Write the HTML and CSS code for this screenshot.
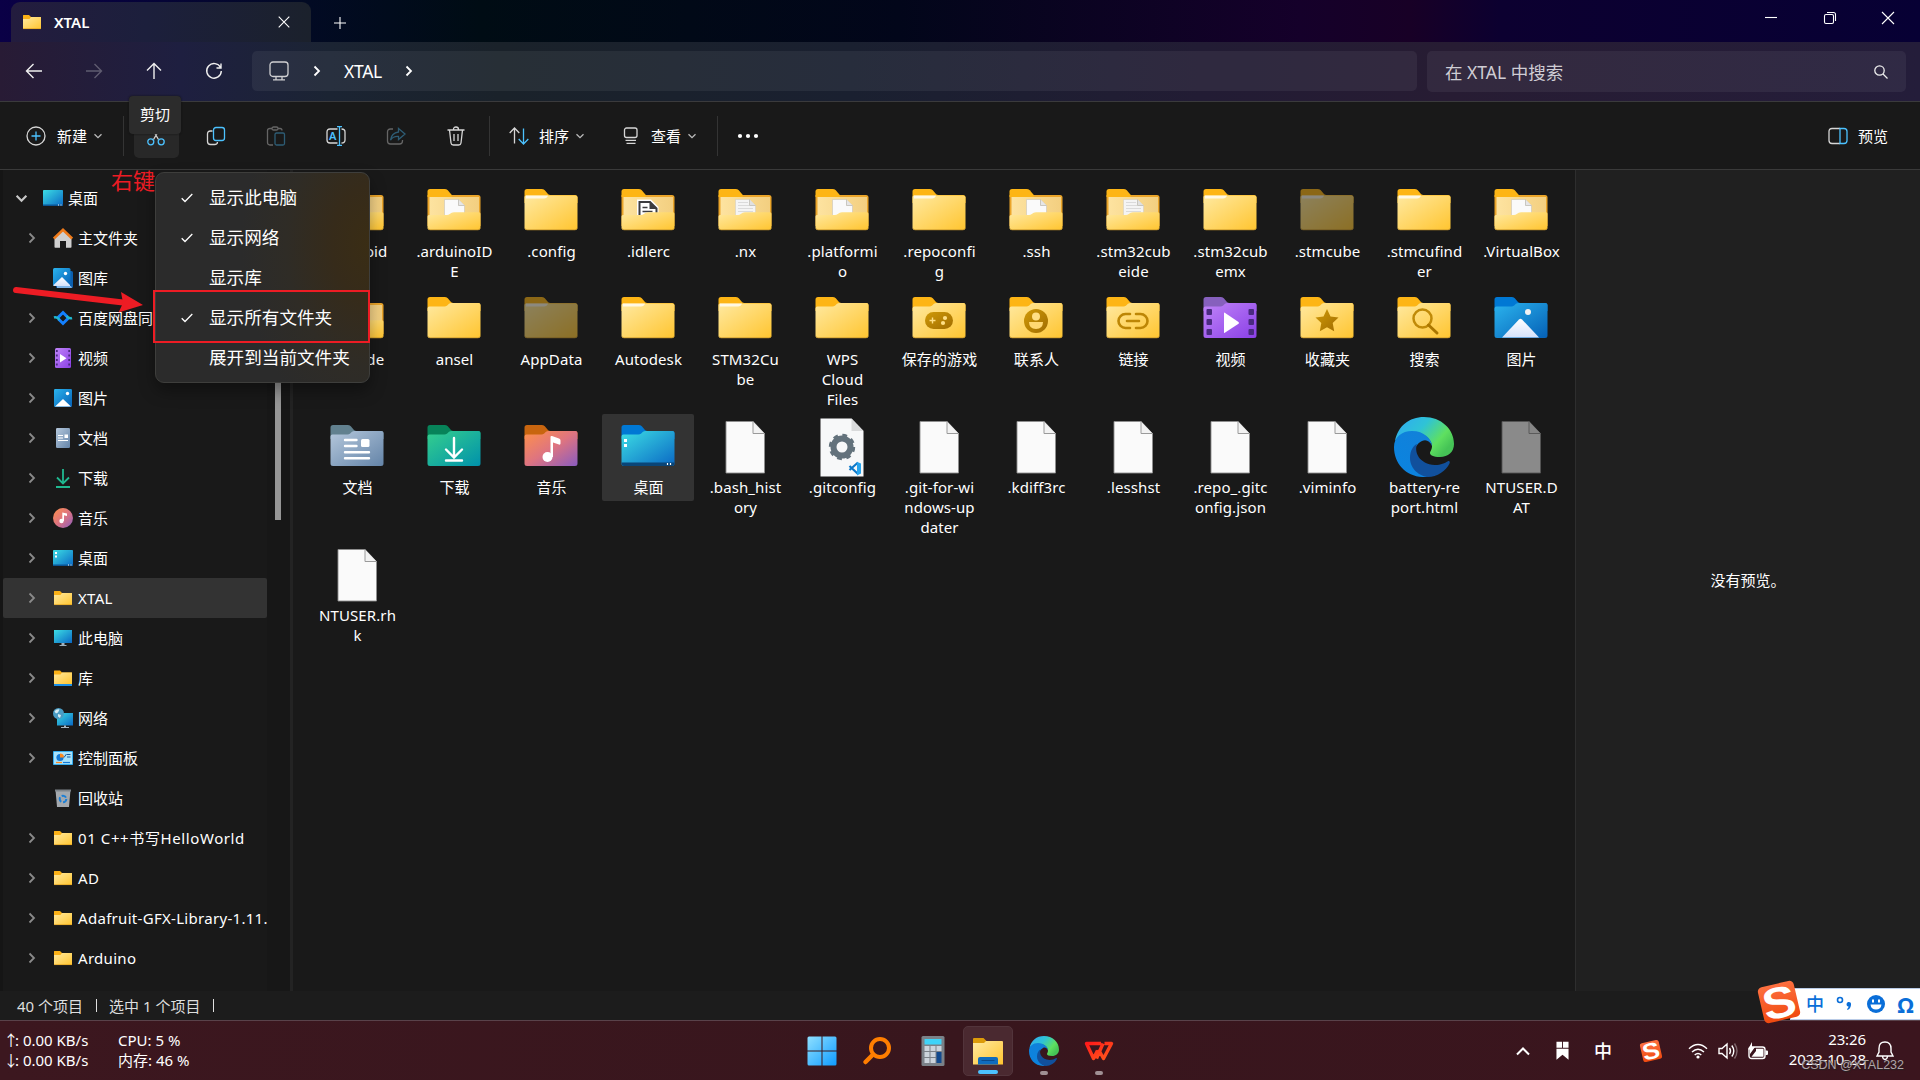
FILE: index.html
```
<!DOCTYPE html>
<html lang="zh-CN">
<head>
  <meta charset="UTF-8" />
  <meta name="viewport" content="width=device-width, initial-scale=1.0"/>
  <title>XTAL</title>
  <link rel="stylesheet" href="styles.css">
</head>
<body>
  <!-- ICONS -->
  <svg class="defs" width="0" height="0">
    <defs>
      <linearGradient id="gFolder" x1="0" y1="0" x2="1" y2="1"><stop offset="0" stop-color="#ffe9a0"/><stop offset="1" stop-color="#ffc530"/></linearGradient>
      <linearGradient id="gInner" x1="0" y1="0" x2="1" y2="0"><stop offset="0" stop-color="#fde3a0"/><stop offset="1" stop-color="#f3cf80"/></linearGradient>
      <linearGradient id="gGold" x1="0" y1="0" x2="1" y2="1"><stop offset="0" stop-color="#d09a08"/><stop offset="1" stop-color="#a06c00"/></linearGradient>
      <linearGradient id="gVideo" x1="0" y1="0" x2="1" y2="1"><stop offset="0" stop-color="#c084f8"/><stop offset="1" stop-color="#8a3fe6"/></linearGradient>
      <linearGradient id="gPic" x1="0" y1="0" x2="1" y2="1"><stop offset="0" stop-color="#2bb4ee"/><stop offset="1" stop-color="#0560b6"/></linearGradient>
      <linearGradient id="gDoc" x1="0" y1="0" x2="1" y2="1"><stop offset="0" stop-color="#b5c8dc"/><stop offset="1" stop-color="#6484a8"/></linearGradient>
      <linearGradient id="gDown" x1="0" y1="0" x2="1" y2="1"><stop offset="0" stop-color="#35cf8d"/><stop offset="1" stop-color="#0091ab"/></linearGradient>
      <linearGradient id="gMusic" x1="0" y1="0" x2="1" y2="1"><stop offset="0" stop-color="#ff914a"/><stop offset=".5" stop-color="#de7480"/><stop offset="1" stop-color="#8a5cc0"/></linearGradient>
      <linearGradient id="gDesk" x1="0" y1="0" x2="1" y2="1"><stop offset="0" stop-color="#3cdde4"/><stop offset="1" stop-color="#0a68c4"/></linearGradient>
      <linearGradient id="gWhite" x1="0" y1="0" x2="0" y2="1"><stop offset="0" stop-color="#fff"/><stop offset="1" stop-color="#d5e2fb"/></linearGradient>
      <linearGradient id="gWin" x1="0" y1="0" x2="1" y2="1"><stop offset="0" stop-color="#8fe0ff"/><stop offset="1" stop-color="#0f9bff"/></linearGradient>
      <linearGradient id="gEdgeTop" x1="0" y1="0" x2="1" y2=".6"><stop offset="0" stop-color="#2fa8f5"/><stop offset=".45" stop-color="#2fc3d6"/><stop offset=".8" stop-color="#5fe060"/><stop offset="1" stop-color="#45c356"/></linearGradient>
      <linearGradient id="gEdgeLeft" x1="1" y1="0" x2="0" y2="1"><stop offset="0" stop-color="#1380d8"/><stop offset="1" stop-color="#0a84e0"/></linearGradient>
      <linearGradient id="gSogou" x1="0" y1="0" x2="0" y2="1"><stop offset="0" stop-color="#fd7040"/><stop offset="1" stop-color="#f04a10"/></linearGradient>
      <linearGradient id="gWps" x1="0" y1="0" x2="1" y2="1"><stop offset="0" stop-color="#ff1a1a"/><stop offset="1" stop-color="#ff5a1c"/></linearGradient>
    </defs>

    <!-- small chrome -->
    <symbol id="chev-right" viewBox="0 0 8 12"><path d="M1.500 1.500 6 6l-4.500 4.500" fill="none" stroke="currentColor" stroke-width="1.800"/></symbol>
    <symbol id="chev-down" viewBox="0 0 12 8"><path d="M1.500 1.500 6 6l4.500-4.500" fill="none" stroke="currentColor" stroke-width="2"/></symbol>
    <symbol id="chev-thin" viewBox="0 0 12 8"><path d="M2.500 2.200 6 5.600l3.500-3.400" fill="none" stroke="currentColor" stroke-width="1.300"/></symbol>
    <symbol id="check" viewBox="0 0 12 10"><path d="M.7 5.200 4 8.500 11.300 1" fill="none" stroke="currentColor" stroke-width="1.300"/></symbol>

    <!-- folders -->
    <symbol id="tab" viewBox="0 0 60 60"><path d="M3.500 22V10.500q0-2.500 2.500-2.500h14.500q2 0 3.300 1.300l3.400 3.900q.8.800 2.300.8H54q2.500 0 2.500 2.500V22z"/></symbol>
    <symbol id="folder" viewBox="0 0 60 60">
      <use href="#tab" fill="#fdb515"/>
      <path d="M3.500 19.500q0-2 2-2h15q1.500 0 2.700-1l1.800-1.700q1-.8 2.500-.8H54.500q2 0 2 2V46.500q0 2.500-2.500 2.500H6q-2.500 0-2.500-2.500z" fill="url(#gFolder)"/>
      <path d="M4 47.300q.5 1.500 2 1.500H54q1.500 0 2-1.500" fill="none" stroke="#c8962a" stroke-width=".8"/>
    </symbol>
    <symbol id="folder-line" viewBox="0 0 60 60">
      <use href="#tab" fill="#fdb515"/>
      <path d="M3.500 16q0-1.500 1.500-1.500H54.500q2 0 2 2V46.500q0 2.500-2.500 2.500H6q-2.500 0-2.500-2.500z" fill="url(#gFolder)"/>
      <path d="M5 14.500h22q-1 3-4 3H5z" fill="#fff" opacity=".75"/>
      <path d="M4 47.300q.5 1.500 2 1.500H54q1.500 0 2-1.500" fill="none" stroke="#c8962a" stroke-width=".8"/>
    </symbol>
    <symbol id="folder-back" viewBox="0 0 60 60">
      <path d="M3.500 14H54q2.500 0 2.500 2.500V45H3.500z" fill="#eba52a"/>
      <path d="M3.500 16V10.500q0-2.500 2.500-2.500h14.500q2 0 3.300 1.300l4 4.700v2z" fill="#fdb515"/>
      <rect x="5.500" y="16" width="49.500" height="27.500" fill="url(#gInner)"/>
    </symbol>
    <symbol id="folder-front" viewBox="0 0 60 60">
      <path d="M3.500 35.500q0-1.500 1.500-1.500h18q1.500 0 2.700-1l2-1.200q1-.6 2.300-.6H55q1.500 0 1.500 1.500V46.500q0 2.500-2.500 2.500H6q-2.500 0-2.500-2.500z" fill="url(#gFolder)"/>
      <path d="M4 47.300q.5 1.500 2 1.500H54q1.500 0 2-1.500" fill="none" stroke="#c8962a" stroke-width=".8"/>
    </symbol>
    <symbol id="folder-file" viewBox="0 0 60 60">
      <use href="#folder-back"/>
      <path d="M20.500 18.500h14l6 6V40h-20z" fill="#fafafa" stroke="#c9c4b8" stroke-width=".6"/>
      <path d="M34.500 18.500v6h6" fill="#e6e6e6" stroke="#b8b4aa" stroke-width=".7"/>
      <use href="#folder-front"/>
    </symbol>
    <symbol id="folder-text" viewBox="0 0 60 60">
      <use href="#folder-back"/>
      <path d="M20.500 18.500h14l6 6V40h-20z" fill="#f4f4f4" stroke="#d5cfc0" stroke-width=".6"/>
      <path d="M23 21.500h10M23 24.500h11M23 27.500h15M23 30.500h15" stroke="#dadada" stroke-width="1"/>
      <path d="M34.500 18.500v6h6" fill="#e0e0e0" stroke="#b8b4aa" stroke-width=".7"/>
      <use href="#folder-front"/>
    </symbol>
    <symbol id="folder-idle" viewBox="0 0 60 60">
      <use href="#folder-back"/>
      <path d="M19 18.500h14l7.500 7.500V40H19z" fill="#fff"/>
      <path d="M21.500 36V21h10.500l6.500 6.500v6" fill="none" stroke="#3c3c40" stroke-width="2"/>
      <path d="M31.500 20.500v7.500h7.500z" fill="#3c3c40"/>
      <path d="M24.500 26.500h5M24.500 30.500h10" stroke="#3c3c40" stroke-width="1.600"/>
      <use href="#folder-front"/>
    </symbol>
    <symbol id="folder-body" viewBox="0 0 60 60">
      <path d="M3.500 19.500q0-2 2-2h15q1.500 0 2.700-1l1.800-1.700q1-.8 2.500-.8H54.500q2 0 2 2V46.500q0 2.500-2.500 2.500H6q-2.500 0-2.500-2.500z"/>
    </symbol>
    <symbol id="folder-games" viewBox="0 0 60 60">
      <use href="#folder"/>
      <rect x="16" y="23" width="28" height="17" rx="8.500" fill="url(#gGold)"/>
      <path d="M20.500 31.500h6M23.500 28.500v6" stroke="#ffdf85" stroke-width="1.400"/>
      <circle cx="36" cy="29" r="2.100" fill="#ffdf85"/><circle cx="34" cy="34" r="2.100" fill="#ffdf85"/>
    </symbol>
    <symbol id="folder-contact" viewBox="0 0 60 60">
      <use href="#folder"/>
      <circle cx="30" cy="32" r="12" fill="url(#gGold)"/>
      <circle cx="30" cy="27.500" r="4" fill="#ffdf85"/>
      <path d="M23 33h14q0 7-7 7t-7-7z" fill="#ffd873"/>
    </symbol>
    <symbol id="folder-link" viewBox="0 0 60 60">
      <use href="#folder"/>
      <path d="M27 25h-4.500a7 7 0 0 0 0 14H27M33 25h4.500a7 7 0 0 1 0 14H33M24 32h12" fill="none" stroke="#bd8605" stroke-width="2.600" stroke-linecap="round"/>
    </symbol>
    <symbol id="folder-star" viewBox="0 0 60 60">
      <use href="#folder"/>
      <path d="M30 20l3.500 7.500 8 1-5.800 5.600 1.500 8.100L30 38.200l-7.200 4 1.500-8.100-5.800-5.600 8-1z" fill="url(#gGold)"/>
    </symbol>
    <symbol id="folder-search" viewBox="0 0 60 60">
      <use href="#folder"/>
      <circle cx="28.500" cy="29.500" r="9" fill="none" stroke="#c08a08" stroke-width="2.500"/>
      <path d="M34.500 36 43 44" stroke="#aa7600" stroke-width="3" stroke-linecap="round"/>
    </symbol>
    <symbol id="folder-video" viewBox="0 0 60 60">
      <use href="#tab" fill="#8660bd"/>
      <use href="#folder-body" fill="url(#gVideo)"/>
      <path d="M24 24v19.500q0 .8.800.3l13.700-9q1-.9 0-1.800l-13.700-9.300q-.8-.5-.8.300z" fill="#fff"/>
      <g fill="#4a2a80"><rect x="6.500" y="20" width="5.500" height="6" rx="1"/><rect x="6.500" y="30" width="5.500" height="6" rx="1"/><rect x="6.500" y="40" width="5.500" height="6" rx="1"/><rect x="48.500" y="20" width="5.500" height="6" rx="1"/><rect x="48.500" y="30" width="5.500" height="6" rx="1"/><rect x="48.500" y="40" width="5.500" height="6" rx="1"/></g>
    </symbol>
    <symbol id="folder-pic" viewBox="0 0 60 60">
      <use href="#tab" fill="#0078d4"/>
      <use href="#folder-body" fill="url(#gPic)"/>
      <path d="M11 48.500 28 30.500q1.500-1.500 3 0L48 48.500z" fill="url(#gWhite)"/>
      <circle cx="37" cy="23" r="3" fill="#f3f3f3"/>
    </symbol>
    <symbol id="folder-doc" viewBox="0 0 60 60">
      <use href="#tab" fill="#62818f"/>
      <use href="#folder-body" fill="url(#gDoc)"/>
      <path d="M18 23h11.500M18 29h11.500M18 35.200h24M18 41.300h24" stroke="#fff" stroke-width="2.400" stroke-linecap="round"/>
      <rect x="34" y="22" width="8.500" height="8" rx="1.500" fill="#fff"/>
    </symbol>
    <symbol id="folder-down" viewBox="0 0 60 60">
      <use href="#tab" fill="#078359"/>
      <use href="#folder-body" fill="url(#gDown)"/>
      <path d="M30 21v19M22 32.500l8 8 8-8M22 43.500h16" fill="none" stroke="#fff" stroke-width="2.400" stroke-linecap="round"/>
    </symbol>
    <symbol id="folder-music" viewBox="0 0 60 60">
      <use href="#tab" fill="#c8650f"/>
      <use href="#folder-body" fill="url(#gMusic)"/>
      <ellipse cx="26.500" cy="40" rx="5" ry="5" fill="#fff"/>
      <path d="M29.500 40V20q0-1.500 1.500-1l7 2.500q1.500.5 1.500 2v3q0 1.500-1.500 1l-6-2V40z" fill="#fff"/>
    </symbol>
    <symbol id="folder-desk" viewBox="0 0 60 60">
      <use href="#tab" fill="#0078d4"/>
      <use href="#folder-body" fill="url(#gDesk)"/>
      <path d="M3.500 45.500h53v1q0 2.500-2.500 2.500H6q-2.500 0-2.500-2.500z" fill="#0a4577"/>
      <path d="M49.500 46v2M52.500 46v2" stroke="#fff" stroke-width="1.200"/>
      <rect x="6" y="22" width="3" height="3" fill="#fff"/><rect x="6" y="27" width="3" height="3" fill="#fff"/>
    </symbol>

    <!-- files -->
    <symbol id="file" viewBox="0 0 60 60">
      <path d="M11 4.500h27L49.500 16.500V56H11z" fill="#fafafa" stroke="#8f8f8f" stroke-width=".9"/>
      <path d="M38 4.500v12h11.500" fill="#f2f2f2" stroke="#9a9a9a" stroke-width="1"/>
    </symbol>
    <symbol id="file-config" viewBox="0 0 60 60">
      <path d="M8.500 1.500h31L51.500 14V59.500h-43z" fill="#f7f8f9"/>
      <path d="M39.500 1.500V14h12z" fill="#d9dadb"/>
      <circle cx="30" cy="30" r="8.500" fill="none" stroke="#63727c" stroke-width="6"/>
      <circle cx="30" cy="30" r="11.700" fill="none" stroke="#63727c" stroke-width="3" stroke-dasharray="4.700 4.490"/>
      <path d="M46 45.500 37.500 53M46 57 37.500 49" stroke="#0e78c8" stroke-width="2.200"/>
      <path d="M45 45l4 1.500v10L45 58.500z" fill="#27a5ee"/>
    </symbol>
    <symbol id="edge" viewBox="0 0 60 60">
      <path d="M1 24C4 9 15 0 30 0c17 0 30 12 30 27 0 8-6 13-14 13-7 0-10-2-10-4 0-1.500 2-3 2-7 0-4-5-13-17-13C10 16 3 21 1 24z" fill="url(#gEdgeTop)"/>
      <path d="M0 30C0 20 8 14 18 14c12 0 20 8 20 15-2-5-6-7-10-5-6 3-10 10-8 20 2 9 9 15 14 15.800C14 62 0 48 0 30z" fill="url(#gEdgeLeft)"/>
      <path d="M23 27c-3 8 2 20 18 21 6 0 10-2 12.500-3.500 1.500-1 3 0 2 2C52 54 43 60 34 60c-8-.5-18-8-18-19 0-8 4-13 7-14z" fill="#11509c"/>
    </symbol>

    <!-- navigation pane -->
    <symbol id="s-folder" viewBox="0 0 20 20"><path d="M1 9V3.500Q1 3 1.500 3H7l2 2h9.500q.5 0 .5.500V9z" fill="#fbb116"/><path d="M1 7h6.500L9 5h10v11.500q0 .5-.5.500h-17Q1 17 1 16.500z" fill="url(#gFolder)"/><path d="M1 16.600h18" stroke="#e0a020" stroke-width=".7"/></symbol>
    <symbol id="s-lib" viewBox="0 0 20 20"><path d="M1 9V3q0-.5.500-.5H7l2 2h9.500q.5 0 .5.500v4z" fill="#fbb116"/><path d="M1 6.500h6.500L9 4.500h10V16H1z" fill="url(#gFolder)"/><path d="M1 16h18v2H1z" fill="#1a8ee6"/></symbol>
    <symbol id="s-desk" viewBox="0 0 20 20"><rect y="2" width="20" height="16" rx=".8" fill="url(#gDesk)"/><path d="M0 16.500h20V18H0z" fill="#0a5494"/><path d="M15 17h1M17.500 17h1" stroke="#fff"/></symbol>
    <symbol id="s-desk2" viewBox="0 0 20 20"><use href="#s-desk"/><path d="M2 4h2v2H2zM2 7.500h2v2H2z" fill="#fff"/></symbol>
    <symbol id="s-home" viewBox="0 0 20 20"><path d="M1.500 9.500 10 2l8.500 7.500V19q0 .8-.8.800H13V13H7v6.800H2.300q-.8 0-.8-.8z" fill="#cfcfcf"/><path d="M.8 10.500 10 1.800l9.200 8.700" fill="none" stroke="#ee7a1a" stroke-width="2.600"/></symbol>
    <symbol id="s-gallery" viewBox="0 0 20 20"><rect x="3" y="3" width="17" height="17" rx="1.500" fill="#0c5fae"/><path d="M4 18h14l1 2H4z" fill="#7fb4e8"/><rect width="17.500" height="18" rx="1.500" fill="url(#gPic)"/><path d="M.5 17 9 9l8 8v1H.5z" fill="url(#gWhite)"/><circle cx="12.500" cy="5.500" r="1.700" fill="#fff"/></symbol>
    <symbol id="s-baidu" viewBox="0 0 20 20"><path d="M4.500 10 10 4.500l4.500 4.500M15.500 10 10 15.500 5.500 11" fill="none" stroke="#1480ff" stroke-width="3"/><path d="M13.500 8q2.500 3 5.500 2M6.500 12Q4 8.500 1 9.500" fill="none" stroke="#20b8d0" stroke-width="2.600"/></symbol>
    <symbol id="s-video" viewBox="0 0 20 20"><rect x="2" width="16" height="20" rx="1.500" fill="url(#gVideo)"/><path d="M7 6v8.500l6.500-4.250z" fill="#fff"/><path d="M3.800 2v17M16.200 2v17" stroke="#4a2a80" stroke-width="1.800" stroke-dasharray="2 2.500"/></symbol>
    <symbol id="s-pic" viewBox="0 0 20 20"><rect x="1" y="1" width="18" height="18" rx="1.200" fill="url(#gPic)"/><path d="M2 18.500 10 11l8 7.500z" fill="#fff"/><circle cx="14.500" cy="5.500" r="1.700" fill="#fff"/></symbol>
    <symbol id="s-doc" viewBox="0 0 20 20"><rect x="3" width="14" height="20" rx="1.200" fill="url(#gDoc)"/><path d="M5 7.500h5M5 10h5M5 12.500h10" stroke="#fff" stroke-width="1.200"/><rect x="11.500" y="6.500" width="3.500" height="3.500" fill="#fff"/></symbol>
    <symbol id="s-down" viewBox="0 0 20 20"><path d="M10 1v14M4 9.500l6 6 6-6M3 19h14" fill="none" stroke="#20b890" stroke-width="1.800"/></symbol>
    <symbol id="s-music" viewBox="0 0 20 20"><circle cx="10" cy="10" r="10" fill="url(#gMusic)"/><circle cx="8.500" cy="13" r="2.200" fill="#fff"/><path d="M9.300 13V4.500l4.700 1v2.500l-3-.7V13z" fill="#fff"/></symbol>
    <symbol id="s-pc" viewBox="0 0 20 20"><rect x="1" y="2" width="18" height="13" fill="url(#gDesk)"/><path d="M8.500 15h3v2h2v1h-7v-1h2z" fill="#9fb0bc"/></symbol>
    <symbol id="s-net" viewBox="0 0 20 20"><rect x="4" y="5" width="16" height="12.500" fill="url(#gDesk)"/><path d="M11 17.500h2v1.500h3v1H8v-1h3z" fill="#a9b6c0"/><circle cx="5.500" cy="5.500" r="5.500" fill="#4a9cc4"/><path d="M1.500 3.500q2-3 5-2l-1.500 3-2 1zM5 6l3 1-1 3-2-1.500z" fill="#d6ecf4"/></symbol>
    <symbol id="s-control" viewBox="0 0 20 20"><rect y="3" width="20" height="14" rx=".8" fill="#35aef0"/><rect x="1" y="4" width="18" height="12" fill="#a8e2fb"/><circle cx="7" cy="9.500" r="3.600" fill="#1478d4"/><path d="M7 9.500V5.500a4 4 0 0 1 4 4z" fill="#ff8a1e"/><path d="M11 9.500 13.500 6M14 6.500h3.500M14 9h3.500" stroke="#15599c" stroke-width="1"/><path d="M3 14.500h6" stroke="#ff8a1e" stroke-width="1.200"/><path d="M10 14.500h7" stroke="#1478d4" stroke-width="1.200"/></symbol>
    <symbol id="s-bin" viewBox="0 0 20 20"><path d="M2.500 2h15L16 19H4z" fill="#a4a9ae"/><path d="M2 1.500h16v2H2z" fill="#7e858b"/><circle cx="10" cy="11" r="3.300" fill="none" stroke="#1b7fd6" stroke-width="2" stroke-dasharray="5 1.900"/></symbol>
    <symbol id="sogou" viewBox="0 0 40 40">
      <g transform="rotate(-13 20 20)"><rect x="4" y="4" width="32" height="32" rx="4" fill="url(#gSogou)"/><text x="20" y="33.500" text-anchor="middle" textLength="29" lengthAdjust="spacingAndGlyphs" class="sogou-s">S</text></g>
    </symbol>
  </svg>

  <div class="window">
    <!-- TITLE BAR -->
    <header class="titlebar">
      <div class="tab">
        <svg class="i20"><use href="#s-folder"/></svg>
        <span class="tab-title">XTAL</span>
        <svg class="tab-close" viewBox="0 0 12 12"><path d="M.7.700 11.300 11.300M11.300.7.700 11.300"/></svg>
      </div>
      <svg class="new-tab" viewBox="0 0 14 14"><path d="M7 1v12M1 7h12"/></svg>
      <div class="caption">
        <svg viewBox="0 0 14 14"><path d="M1 6.500h12"/></svg>
        <svg viewBox="0 0 14 14"><rect x="1.500" y="3.500" width="9" height="9" rx="1.500"/><path d="M4 1.500h6.500q2 0 2 2V10"/></svg>
        <svg viewBox="0 0 14 14"><path d="M1 1l12 12M13 1 1 13"/></svg>
      </div>
    </header>

    <!-- ADDRESS ROW -->
    <nav class="navbar">
      <div class="nav-buttons">
        <svg viewBox="0 0 18 18"><path d="M17 9H1.500M8.500 2l-7 7 7 7"/></svg>
        <svg class="dim" viewBox="0 0 18 18"><path d="M1 9h15.500M9.500 2l7 7-7 7"/></svg>
        <svg viewBox="0 0 18 18"><path d="M9 17V1.500M2 8.500l7-7 7 7"/></svg>
        <svg viewBox="0 0 18 18"><path d="M15.500 5.500A7.300 7.300 0 1 0 16.300 9M16 1.500V6h-4.500"/></svg>
      </div>
      <div class="address">
        <svg class="pc" viewBox="0 0 20 20"><rect x="1" y="1" width="18" height="14.500" rx="3"/><path d="M7 15.500v3M13 15.500v3M4 18.800h12"/></svg>
        <svg class="crumb"><use href="#chev-right"/></svg>
        <span>XTAL</span>
        <svg class="crumb"><use href="#chev-right"/></svg>
      </div>
      <div class="search">
        <span>在 XTAL 中搜索</span>
        <svg viewBox="0 0 14 14"><circle cx="5.500" cy="5.500" r="4.700"/><path d="M9 9l4.500 4.500"/></svg>
      </div>
    </nav>

    <!-- COMMAND BAR -->
    <div class="toolbar">
      <div class="cmd cmd-new">
        <svg class="i20 ln" viewBox="0 0 20 20"><circle cx="10" cy="10" r="9"/><path class="blue" d="M10 5.500v9M5.500 10h9"/></svg>
        <span>新建</span>
        <svg class="drop"><use href="#chev-thin"/></svg>
      </div>
      <i class="sep"></i>
      <div class="icons">
        <div class="cut">
          <svg class="i20 ln" viewBox="0 0 20 20"><path d="M5 1l7.500 12.500M15 1 7.500 13.500"/><circle class="blue" cx="4.800" cy="15.800" r="3"/><circle class="blue" cx="15.200" cy="15.800" r="3"/></svg>
          <div class="tooltip">剪切</div>
        </div>
        <svg class="i20 ln" viewBox="0 0 20 20"><path d="M6.500 5H4.500Q1.500 5 1.500 8v7.500q0 3 3 3h4q3 0 3-2.500"/><rect class="blue" x="7.500" y="1.500" width="11" height="13" rx="2.500"/></svg>
        <svg class="i20 ln off" viewBox="0 0 20 20"><path d="M7 19H4q-2.500 0-2.500-2.500V4.500Q1.500 2.500 4 2.500h2M12 2.500h2q2 0 2 2"/><rect x="6" y="1" width="6" height="3" rx="1.500"/><rect class="blue" x="9" y="7" width="9.500" height="12" rx="1.500"/></svg>
        <svg class="i20 ln" viewBox="0 0 20 20"><path d="M11.500 3H4Q1 3 1 6v8q0 3 3 3h7.500M15.500 3q3.500 0 3.500 3v8q0 3-3.500 3"/><path class="blue" d="M13.500.700v18.600M11 .7h5M11 19.300h5"/><text x="6.800" y="14" text-anchor="middle" class="rename-a">A</text></svg>
        <svg class="i20 ln off" viewBox="0 0 20 20"><path d="M7 3H4.500Q1.500 3 1.500 6v9q0 3 3 3h9q3 0 3-3v-1"/><path class="blue" d="M12.500 2.500 19 8l-6.500 5.500v-3q-5-.5-8 3.500 1-7 8-8z"/></svg>
        <svg class="i20 ln" viewBox="0 0 20 20"><path d="M1.500 4h17M3.500 4l1.500 13q.3 2 2.300 2h5.400q2 0 2.300-2L16.500 4M7.500 3.500q0-2.500 2.500-2.500t2.500 2.500M8 8v7M12 8v7"/></svg>
      </div>
      <i class="sep"></i>
      <div class="cmd cmd-sort">
        <svg class="i20 ln" viewBox="0 0 20 20"><path d="M5.500 17.500V2M.7 7l4.800-5 4.800 5"/><path class="blue" d="M14.500 2.500V18M9.700 13l4.800 5 4.800-5"/></svg>
        <span>排序</span>
        <svg class="drop"><use href="#chev-thin"/></svg>
      </div>
      <div class="cmd cmd-view">
        <svg class="i20 ln" viewBox="0 0 20 20"><rect x="3.500" y="2" width="12.500" height="9.500" rx="2"/><path d="M4.500 14.300h10.500M5.500 17.300h9"/></svg>
        <span>查看</span>
        <svg class="drop"><use href="#chev-thin"/></svg>
      </div>
      <i class="sep"></i>
      <svg class="dots" viewBox="0 0 22 6"><circle cx="3" cy="3" r="2.100"/><circle cx="11" cy="3" r="2.100"/><circle cx="19" cy="3" r="2.100"/></svg>
      <div class="cmd cmd-preview">
        <svg class="i20 ln" viewBox="0 0 20 20"><path d="M12 2.500H4Q1 2.500 1 5.500v9q0 3 3 3h8"/><path class="blue" d="M12 2.500h4q3 0 3 3v9q0 3-3 3h-4z"/></svg>
        <span>预览</span>
      </div>
    </div>

    <main class="content">
      <!-- TREE -->
      <aside class="sidebar">
        <ul class="tree">
          <li class="root"><svg class="open"><use href="#chev-down"/></svg><svg class="i20"><use href="#s-desk"/></svg><span>桌面</span></li>
          <li><svg class="arrow"><use href="#chev-right"/></svg><svg class="i20"><use href="#s-home"/></svg><span>主文件夹</span></li>
          <li><i class="arrow"></i><svg class="i20"><use href="#s-gallery"/></svg><span>图库</span></li>
          <li><svg class="arrow"><use href="#chev-right"/></svg><svg class="i20"><use href="#s-baidu"/></svg><span>百度网盘同</span></li>
          <li><svg class="arrow"><use href="#chev-right"/></svg><svg class="i20"><use href="#s-video"/></svg><span>视频</span></li>
          <li><svg class="arrow"><use href="#chev-right"/></svg><svg class="i20"><use href="#s-pic"/></svg><span>图片</span></li>
          <li><svg class="arrow"><use href="#chev-right"/></svg><svg class="i20"><use href="#s-doc"/></svg><span>文档</span></li>
          <li><svg class="arrow"><use href="#chev-right"/></svg><svg class="i20"><use href="#s-down"/></svg><span>下载</span></li>
          <li><svg class="arrow"><use href="#chev-right"/></svg><svg class="i20"><use href="#s-music"/></svg><span>音乐</span></li>
          <li><svg class="arrow"><use href="#chev-right"/></svg><svg class="i20"><use href="#s-desk2"/></svg><span>桌面</span></li>
          <li class="selected"><svg class="arrow"><use href="#chev-right"/></svg><svg class="i20"><use href="#s-folder"/></svg><span class="en">XTAL</span></li>
          <li><svg class="arrow"><use href="#chev-right"/></svg><svg class="i20"><use href="#s-pc"/></svg><span>此电脑</span></li>
          <li><svg class="arrow"><use href="#chev-right"/></svg><svg class="i20"><use href="#s-lib"/></svg><span>库</span></li>
          <li><svg class="arrow"><use href="#chev-right"/></svg><svg class="i20"><use href="#s-net"/></svg><span>网络</span></li>
          <li><svg class="arrow"><use href="#chev-right"/></svg><svg class="i20"><use href="#s-control"/></svg><span>控制面板</span></li>
          <li><i class="arrow"></i><svg class="i20"><use href="#s-bin"/></svg><span>回收站</span></li>
          <li><svg class="arrow"><use href="#chev-right"/></svg><svg class="i20"><use href="#s-folder"/></svg><span class="en wide">01 C++书写HelloWorld</span></li>
          <li><svg class="arrow"><use href="#chev-right"/></svg><svg class="i20"><use href="#s-folder"/></svg><span class="en">AD</span></li>
          <li><svg class="arrow"><use href="#chev-right"/></svg><svg class="i20"><use href="#s-folder"/></svg><span class="en">Adafruit-GFX-Library-1.11.</span></li>
          <li><svg class="arrow"><use href="#chev-right"/></svg><svg class="i20"><use href="#s-folder"/></svg><span class="en">Arduino</span></li>
        </ul>
        <div class="scrollbar"><div class="thumb"></div></div>
      </aside>

      <!-- FILES -->
      <section class="files">
        <div class="item"><svg><use href="#folder-file"/></svg><p>.android</p></div>
        <div class="item"><svg><use href="#folder-file"/></svg><p>.arduinoID<br>E</p></div>
        <div class="item"><svg><use href="#folder-line"/></svg><p>.config</p></div>
        <div class="item"><svg><use href="#folder-idle"/></svg><p>.idlerc</p></div>
        <div class="item"><svg><use href="#folder-text"/></svg><p>.nx</p></div>
        <div class="item"><svg><use href="#folder-file"/></svg><p>.platformi<br>o</p></div>
        <div class="item"><svg><use href="#folder-line"/></svg><p>.repoconfi<br>g</p></div>
        <div class="item"><svg><use href="#folder-file"/></svg><p>.ssh</p></div>
        <div class="item"><svg><use href="#folder-text"/></svg><p>.stm32cub<br>eide</p></div>
        <div class="item"><svg><use href="#folder-line"/></svg><p>.stm32cub<br>emx</p></div>
        <div class="item hidden-file"><svg><use href="#folder-line"/></svg><p>.stmcube</p></div>
        <div class="item"><svg><use href="#folder-line"/></svg><p>.stmcufind<br>er</p></div>
        <div class="item"><svg><use href="#folder-file"/></svg><p>.VirtualBox</p></div>

        <div class="item"><svg><use href="#folder-file"/></svg><p>.vscode</p></div>
        <div class="item"><svg><use href="#folder"/></svg><p>ansel</p></div>
        <div class="item hidden-file"><svg><use href="#folder-line"/></svg><p>AppData</p></div>
        <div class="item"><svg><use href="#folder-line"/></svg><p>Autodesk</p></div>
        <div class="item"><svg><use href="#folder-line"/></svg><p>STM32Cu<br>be</p></div>
        <div class="item"><svg><use href="#folder"/></svg><p>WPS<br>Cloud<br>Files</p></div>
        <div class="item"><svg><use href="#folder-games"/></svg><p>保存的游戏</p></div>
        <div class="item"><svg><use href="#folder-contact"/></svg><p>联系人</p></div>
        <div class="item"><svg><use href="#folder-link"/></svg><p>链接</p></div>
        <div class="item"><svg><use href="#folder-video"/></svg><p>视频</p></div>
        <div class="item"><svg><use href="#folder-star"/></svg><p>收藏夹</p></div>
        <div class="item"><svg><use href="#folder-search"/></svg><p>搜索</p></div>
        <div class="item"><svg><use href="#folder-pic"/></svg><p>图片</p></div>

        <div class="item"><svg><use href="#folder-doc"/></svg><p>文档</p></div>
        <div class="item"><svg><use href="#folder-down"/></svg><p>下载</p></div>
        <div class="item"><svg><use href="#folder-music"/></svg><p>音乐</p></div>
        <div class="item selected"><svg><use href="#folder-desk"/></svg><p>桌面</p></div>
        <div class="item"><svg><use href="#file"/></svg><p>.bash_hist<br>ory</p></div>
        <div class="item"><svg><use href="#file-config"/></svg><p>.gitconfig</p></div>
        <div class="item"><svg><use href="#file"/></svg><p>.git-for-wi<br>ndows-up<br>dater</p></div>
        <div class="item"><svg><use href="#file"/></svg><p>.kdiff3rc</p></div>
        <div class="item"><svg><use href="#file"/></svg><p>.lesshst</p></div>
        <div class="item"><svg><use href="#file"/></svg><p>.repo_.gitc<br>onfig.json</p></div>
        <div class="item"><svg><use href="#file"/></svg><p>.viminfo</p></div>
        <div class="item"><svg><use href="#edge"/></svg><p>battery-re<br>port.html</p></div>
        <div class="item hidden-file"><svg><use href="#file"/></svg><p>NTUSER.D<br>AT</p></div>

        <div class="item"><svg><use href="#file"/></svg><p>NTUSER.rh<br>k</p></div>
      </section>

      <aside class="preview">没有预览。</aside>
    </main>

    <footer class="status"><span>40 个项目</span><i></i><span>选中 1 个项目</span><i></i></footer>

    <!-- CONTEXT MENU -->
    <ul class="menu">
      <li><svg><use href="#check"/></svg>显示此电脑</li>
      <li><svg><use href="#check"/></svg>显示网络</li>
      <li>显示库</li>
      <li><svg><use href="#check"/></svg>显示所有文件夹</li>
      <li>展开到当前文件夹</li>
    </ul>

    <!-- red marks -->
    <div class="note">右键</div>
    <div class="mark"></div>
    <svg class="pointer" viewBox="0 0 132 28"><path d="M5 4 L112 16.500" stroke="#ed1c24" stroke-width="6" stroke-linecap="round"/><path d="M110 6 L132 19 L107.500 26.500 L112 17z" fill="#ed1c24"/></svg>
  </div>

  <!-- TASKBAR -->
  <div class="taskbar">
    <div class="monitor">
      <span><b>↑</b>: 0.00 KB/s</span><span>CPU: 5 %</span>
      <span><b>↓</b>: 0.00 KB/s</span><span>内存: 46 %</span>
    </div>
    <div class="apps">
      <div class="app"><svg viewBox="0 0 30 30"><path d="M.5 2q0-1.500 1.500-1.500h12.500v14H.5zM15.500.5H28q1.500 0 1.500 1.500v12.500h-14zM.5 15.500h14v14H2Q.5 29.500.5 28zM15.500 15.500h14V28q0 1.500-1.500 1.500H15.500z" fill="url(#gWin)"/></svg></div>
      <div class="app"><svg viewBox="0 0 30 30"><circle cx="18" cy="12" r="9" fill="none" stroke="#ff7e00" stroke-width="4"/><path d="M11 18.500 3.500 26" stroke="#ff7e00" stroke-width="4.500" stroke-linecap="round"/></svg></div>
      <div class="app"><svg viewBox="0 0 30 30"><rect x="3.500" width="23" height="30" rx="1.500" fill="#7b8188"/><rect x="6.500" y="3" width="17" height="5.500" rx=".5" fill="#3fd3f8"/><g fill="#ccd4dc"><rect x="6.500" y="10" width="5" height="5"/><rect x="12.500" y="10" width="5" height="5"/><rect x="18.500" y="10" width="5" height="5"/><rect x="6.500" y="16" width="5" height="5"/><rect x="12.500" y="16" width="5" height="5"/><rect x="6.500" y="22" width="5" height="5"/><rect x="12.500" y="22" width="5" height="5"/></g><rect x="18.500" y="16" width="5" height="11" fill="#124a8e"/></svg></div>
      <div class="app active"><svg viewBox="0 0 30 30"><path d="M0 10V3q0-1 1-1h9.500l3 3H13v5z" fill="#dc9b0a"/><path d="M0 7h11l2-2h16q1 0 1 1v22.500H0z" fill="url(#gFolder)"/><path d="M5 28.500V23q0-2 2-2h16q2 0 2 2v5.500z" fill="#0f6cbd"/><path d="M8.500 24.500h13" stroke="#0a4a8a"/></svg></div>
      <div class="app running"><svg><use href="#edge"/></svg></div>
      <div class="app running"><svg viewBox="0 0 30 30"><path d="M17 7.500H2.500L9.500 22.500l4-8M12.500 22.500 19 7.500M14.500 13.500l5 9L27.500 7.500h-7" fill="none" stroke="url(#gWps)" stroke-width="3.400" stroke-linejoin="round"/></svg></div>
    </div>
    <div class="tray">
      <svg class="t-up" viewBox="0 0 14 10"><path d="M1 8.500l6-6 6 6"/></svg>
      <svg class="t-flag" viewBox="0 0 14 20"><path d="M.5.500H6.500V7H.5zM7.500.500h6V7h-6zM.5 8h13v12L7 14.500.5 20z"/></svg>
      <span class="t-zh">中</span>
      <svg class="t-sogou"><use href="#sogou"/></svg>
      <svg class="t-net" viewBox="0 0 20 16"><path d="M1 5.800q9-8.500 18 0M4 9q6-5.500 12 0M6.700 12q3.300-3 6.600 0"/><circle cx="10" cy="14" r="1.600"/></svg>
      <svg class="t-vol" viewBox="0 0 20 18"><path d="M1 6.500h3L9 2v14l-5-4.500H1zM11.500 6q2 3 0 6M13.800 3.500q4 5.500 0 11"/><path d="M16.500 1.500q5 7.500 0 15" opacity=".35"/></svg>
      <svg class="t-bat" viewBox="0 0 20 18"><rect x="1" y="5" width="16" height="11.500" rx="2.500"/><path class="fill" d="M8 6.800h7.500v7.900h-12L8 9zM17.500 8.500H19q1 0 1 1v2.500q0 1-1 1h-1.500z"/><path class="fill" d="M4 0v5h3L2 12V7.500H0z"/></svg>
      <div class="clock"><span>23:26</span><span>2023-10-28</span></div>
      <svg class="t-bell" viewBox="0 0 18 20"><path d="M9 1q-6 0-6 6.500V11l-2 4h16l-2-4V7.500Q15 1 9 1zM6.500 15.500q.5 3 2.500 3t2.500-3"/></svg>
    </div>
  </div>

  <!-- IME bar -->
  <div class="ime">
    <svg class="ime-logo"><use href="#sogou"/></svg>
    <span>中</span>
    <svg viewBox="0 0 18 16"><circle cx="4" cy="4" r="2.500" fill="none" stroke="#0a6ed8" stroke-width="1.600"/><path d="M12 6q3.500-.5 3 3-.5 4-3.500 5l-.5-1q1.500-1 1.500-2.500-2 0-2-2 0-2 1.500-2.500z" fill="#0a6ed8"/></svg>
    <svg viewBox="0 0 18 18"><circle cx="9" cy="9" r="9" fill="#0a6ed8"/><path d="M5 4.500h2v3H5zM11 4.500h2v3h-2zM3.500 9.500h11q-.5 5-5.500 5t-5.500-5z" fill="#fff"/></svg>
    <span class="omega">Ω</span>
  </div>
  <div class="watermark">CSDN @XTAL232</div>
</body>
</html>
```
FILE: styles.css
```
* {
  box-sizing: border-box;
}

body {
  margin: 0;
  width: 1920px;
  height: 1080px;
  overflow: hidden;
  position: relative;
  font-family: "Noto Sans", "Noto Sans CJK SC", sans-serif;
  font-size: 15px;
  line-height: 20px;
  color: #fff;
  background: #191919;
}

ul, p {
  margin: 0;
  padding: 0;
  list-style: none;
}

svg {
  display: block;
  flex: none;
}

.defs {
  position: absolute;
}

.i20 {
  width: 20px;
  height: 20px;
}

.window {
  height: 1020px;
  display: flex;
  flex-direction: column;
}

/* title bar */
.titlebar {
  height: 42px;
  flex: none;
  display: flex;
  align-items: flex-end;
  padding-left: 11px;
  background: linear-gradient(90deg, #0a0046 0, #06023c 120px, #020a24 300px, #000c14 480px, #02061a 900px, #15002a 1300px, #180026 1410px, #0c0030 1500px, #070034 1920px);
}

.tab {
  width: 300px;
  height: 40px;
  display: flex;
  align-items: center;
  padding: 0 21px 0 11px;
  border-radius: 9px 9px 0 0;
  background: linear-gradient(90deg, #231c3e, #1c1f3c 45%, #1b212c);
}

.tab-title {
  margin-left: 12px;
  font-size: 15px;
  font-weight: 600;
  flex: 1;
}

.tab-close {
  width: 12px;
  height: 12px;
}

.titlebar svg path, .caption rect {
  stroke: #fff;
  stroke-width: 1.1;
  fill: none;
}

.new-tab {
  width: 14px;
  height: 14px;
  margin: 0 0 12px 22px;
}

.caption {
  margin: 0 25px 17px auto;
  display: flex;
  gap: 44.5px;
}

.caption svg {
  width: 14px;
  height: 14px;
}

/* address row */
.navbar {
  height: 60px;
  flex: none;
  display: flex;
  padding: 9px 14px 0 25px;
  border-bottom: 1px solid #3a3a3c;
  background: linear-gradient(90deg, #281b35 0, #1e1f40 180px, #1b2433 330px, #1a222a 500px, #1a2030 850px, #221c34 1200px, #271c33 1450px, #241d3a 1920px);
}

.nav-buttons {
  width: 227px;
  height: 40px;
  display: flex;
  align-items: center;
  gap: 42px;
}

.nav-buttons svg {
  width: 18px;
  height: 18px;
  fill: none;
  stroke: #f0f0f0;
  stroke-width: 1.4;
}

.nav-buttons .dim {
  stroke: #5f5c70;
}

.address, .search {
  height: 40px;
  border-radius: 5px;
  background: rgba(255, 255, 255, 0.06);
  display: flex;
  align-items: center;
  font-size: 17.5px;
}

.address {
  width: 1165px;
  padding-left: 17px;
}

.address span {
  width: 41px;
  letter-spacing: -0.3px;
  margin: 0 20px 0 23px;
}

.pc {
  width: 20px;
  height: 20px;
  margin-right: 24px;
  fill: none;
  stroke: #cfcfd2;
  stroke-width: 1.3;
}

.crumb {
  width: 8px;
  height: 12px;
}

.search {
  margin-left: 10px;
  flex: 1;
  height: 41px;
  padding: 0 18px;
  justify-content: space-between;
  color: #cfcdd4;
}

.search svg {
  width: 14px;
  height: 14px;
  fill: none;
  stroke: #eee;
  stroke-width: 1.3;
}

/* command bar */
.toolbar {
  height: 68px;
  flex: none;
  display: flex;
  align-items: center;
  padding: 0 32px 0 26px;
  border-bottom: 1px solid #3a3a3a;
}

.ln {
  fill: none;
  stroke: #d6d6d6;
  stroke-width: 1.3;
}

.ln .blue {
  stroke: #4cc2ff;
}

.off {
  opacity: 0.4;
}

.rename-a {
  font: 600 11px "Noto Sans";
  fill: #4cc2ff;
  stroke: none;
}

.cmd {
  display: flex;
  align-items: center;
}

.cmd span {
  margin: 1px 5px 0 10px;
}

.drop {
  width: 12px;
  height: 8px;
  color: #bbb;
}

.cmd-new {
  width: 97px;
}

.cmd-new span {
  margin-left: 11px;
}

.cmd-sort {
  margin-left: 19px;
  width: 112px;
}

.cmd-view {
  width: 96px;
}

.cmd-preview {
  margin-left: auto;
}

.cmd-preview span {
  margin: 1px 0 0 10px;
}

.sep {
  width: 1px;
  height: 40px;
  background: #343434;
}

.icons {
  display: flex;
  align-items: center;
  width: 365px;
  gap: 40px;
  padding-left: 10px;
}

.icons > svg:nth-child(2) {
  margin-left: -13px;
}

.cut {
  position: relative;
  width: 45px;
  height: 45px;
  display: flex;
  align-items: center;
  justify-content: center;
  border-radius: 5px;
  background: #282828;
}

.cut > svg {
  margin: 1px 2px 0 0;
}

.tooltip {
  position: absolute;
  left: -5px;
  top: -17px;
  width: 52px;
  height: 38px;
  line-height: 37px;
  text-align: center;
  border-radius: 4px;
  background: #2c2c2c;
  box-shadow: 0 0 2px #111;
}

.dots {
  width: 22px;
  height: 6px;
  margin-left: 19px;
  fill: #fff;
}

/* body */
.content {
  flex: 1;
  min-height: 0;
  display: flex;
}

.sidebar {
  width: 290px;
  display: flex;
  border-left: 3px solid #151515;
}

.tree {
  width: 264px;
  padding-top: 8px;
  overflow: hidden;
}

.tree li {
  height: 40px;
  display: flex;
  align-items: center;
  padding-left: 25px;
  white-space: nowrap;
}

.tree li.root {
  padding-left: 12px;
}

.tree .selected {
  background: #333;
  border-radius: 2px;
}

.tree span {
  margin-left: 5px;
}

.tree .en {
  letter-spacing: 0.3px;
}

.tree .wide {
  letter-spacing: 0.6px;
}

.arrow {
  width: 8px;
  height: 12px;
  margin-right: 17px;
  color: #8a8a8a;
}

.open {
  width: 13px;
  height: 9px;
  margin-right: 15px;
  color: #c8c8c8;
}

.scrollbar {
  width: 23px;
  background: #171717;
  padding: 12px 0 0 8px;
}

.thumb {
  width: 6px;
  height: 338px;
  background: #969696;
}

.files {
  flex: 1;
  border-left: 3px solid #232323;
  padding: 8px 0 0 18px;
  display: grid;
  grid-template-columns: repeat(13, 92px);
  column-gap: 5px;
  row-gap: 1px;
  align-items: start;
  align-content: start;
}

.item {
  padding: 3px 0 4px;
  text-align: center;
}

.item svg {
  width: 60px;
  height: 60px;
  margin: 0 auto;
}

.item p {
  padding-left: 1px;
  letter-spacing: 0.1px;
  white-space: nowrap;
}

.item.selected {
  background: #333;
  border-radius: 2px;
}

.hidden-file svg {
  opacity: 0.5;
}

.preview {
  width: 345px;
  border-left: 1px solid #2e2e2e;
  background: #202020;
  text-align: center;
  padding-top: 400px;
}

.status {
  height: 29px;
  flex: none;
  display: flex;
  align-items: center;
  padding-left: 17px;
  background: #1c1c1c;
  color: #dedede;
}

.status i {
  width: 1px;
  height: 13px;
  margin: 0 12px 0 13px;
  background: #e0e0e0;
}

/* context menu */
.menu {
  position: absolute;
  left: 155px;
  top: 172px;
  width: 215px;
  height: 211px;
  padding-top: 6px;
  border: 1px solid #3e3e3c;
  border-radius: 9px;
  background: radial-gradient(ellipse 130px 190px at 215px 70px, #3a2d14 0, #362b1a 30%, #2f2c26 65%, #2b2b2b 100%);
  box-shadow: 0 8px 16px rgba(0, 0, 0, 0.35);
  font-size: 17.6px;
}

.menu li {
  position: relative;
  height: 40px;
  line-height: 36px;
  padding-left: 53px;
  white-space: nowrap;
}

.menu svg {
  position: absolute;
  left: 25px;
  top: 14px;
  width: 12px;
  height: 10px;
}

/* red marks */
.note {
  position: absolute;
  left: 111px;
  top: 164px;
  font-size: 22px;
  line-height: 32px;
  color: #ed1c24;
}

.mark {
  position: absolute;
  left: 153px;
  top: 290px;
  width: 217px;
  height: 53px;
  border: 2px solid #ed1c24;
}

.pointer {
  position: absolute;
  left: 11px;
  top: 286px;
  width: 132px;
  height: 28px;
}

/* taskbar */
.taskbar {
  height: 60px;
  display: flex;
  align-items: center;
  border-top: 1px solid #59424a;
  background: linear-gradient(90deg, #3c171f, #38161d 50%, #3b151e);
}

.monitor {
  width: 797px;
  padding: 0 0 2px 7px;
  display: grid;
  grid-template-columns: 111px auto;
  justify-content: start;
}

.monitor b {
  display: inline-flex;
  justify-content: center;
  width: 8px;
  font-weight: 400;
}

.apps {
  display: flex;
  gap: 5.4px;
}

.app {
  position: relative;
  width: 50px;
  height: 50px;
  display: flex;
  align-items: center;
  justify-content: center;
  border-radius: 5px;
}

.app svg {
  width: 30px;
  height: 30px;
}

.app.active {
  background: #4a2930;
  border: 1px solid #52343b;
}

.app.active::after, .app.running::after {
  content: "";
  position: absolute;
  bottom: 1px;
  width: 20px;
  height: 4px;
  border-radius: 2px;
  background: #4cc2ff;
}

.app.running::after {
  width: 8px;
  background: #a09094;
}

.tray {
  margin-left: auto;
  margin-right: 26px;
  display: flex;
  align-items: center;
}

.tray svg {
  fill: none;
  stroke: #fff;
  stroke-width: 1.4;
}

.tray .t-up {
  width: 14px;
  height: 10px;
  margin-right: 26px;
  stroke-width: 2;
}

.tray .t-flag {
  width: 13px;
  height: 19px;
  margin-right: 25px;
  fill: #fff;
  stroke: none;
}

.t-zh {
  width: 18px;
  font-size: 18px;
  line-height: 24px;
  font-weight: 500;
  margin-right: 27px;
}

.tray .t-sogou {
  width: 24px;
  height: 24px;
  margin-right: 25px;
  stroke: none;
}

.sogou-s {
  font: 700 38px "Liberation Sans";
  fill: #fff;
  stroke: none;
}

.t-net {
  width: 20px;
  height: 16px;
  margin-right: 10px;
}

.t-net circle, .t-bat .fill {
  fill: #fff;
  stroke: none;
}

.t-vol {
  width: 20px;
  height: 18px;
  margin-right: 10px;
}

.t-bat {
  width: 20px;
  height: 18px;
  margin-right: 18px;
}

.clock {
  display: flex;
  flex-direction: column;
  align-items: flex-end;
  width: 80px;
  padding-bottom: 3px;
  letter-spacing: -0.1px;
}

.t-bell {
  width: 18px;
  height: 20px;
  margin-left: 10px;
}

.ime {
  position: absolute;
  left: 1790px;
  top: 988px;
  width: 130px;
  height: 32px;
  padding: 0 6px 0 15px;
  display: flex;
  align-items: center;
  justify-content: space-between;
  background: #fff;
  border: 1px solid #b9cbe6;
  border-right: 0;
  color: #0a6ed8;
  font-size: 18px;
  font-weight: 500;
}

.ime svg {
  width: 18px;
  height: 18px;
}

.ime .ime-logo {
  position: absolute;
  left: -35px;
  top: -10px;
  width: 46px;
  height: 46px;
}

.omega {
  font-size: 22px;
  font-weight: 700;
}

.watermark {
  position: absolute;
  right: 16px;
  top: 1056px;
  font: 12.5px/18px "Liberation Sans", sans-serif;
  color: #b0a4a8;
  text-shadow: 1px 1px 1px #222;
}
```
